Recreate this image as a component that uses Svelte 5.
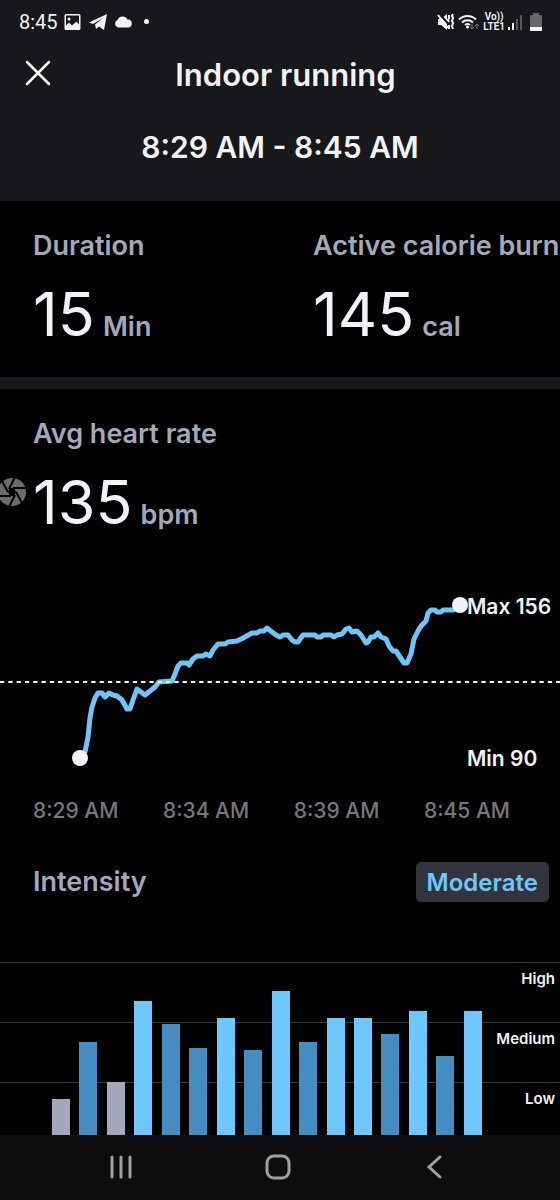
<script lang="ts">
	// heart rate trace, in chart units (560 wide)
	const trace = [
		[80, 168], [85, 162], [88, 147], [90, 128], [92, 117], [95, 108], [98, 103], [102, 103],
		[105, 107], [109, 103], [113, 105], [117, 106], [122, 110], [127, 119], [130, 119],
		[133, 110], [137, 99], [141, 102], [145, 105], [150, 101], [155, 97], [159, 92], [172, 91],
		[175, 84], [178, 76], [181, 73], [187, 73], [189, 75], [193, 69], [197, 66], [203, 66],
		[206, 64], [210, 66], [213, 60], [218, 54], [225, 54], [228, 52], [237, 51], [243, 48],
		[252, 43], [257, 43], [260, 41], [264, 41], [267, 38], [272, 42], [276, 45], [280, 47],
		[283, 45], [288, 45], [292, 50], [295, 52], [298, 52], [303, 45], [315, 45], [317, 47],
		[321, 47], [323, 45], [331, 45], [334, 47], [337, 45], [342, 44], [346, 39], [349, 38],
		[352, 42], [357, 41], [361, 45], [366, 53], [368, 52], [371, 47], [374, 47], [378, 43],
		[381, 47], [386, 49], [389, 56], [393, 61], [396, 61], [400, 67], [404, 73], [407, 73],
		[411, 64], [414, 49], [419, 39], [422, 35], [426, 31], [428, 23], [431, 20], [435, 20],
		[437, 22], [441, 22], [443, 20], [453, 20], [460, 16]
	];
	const points = trace.map((p) => p.join(',')).join(' ');

	const times = ['8:29 AM', '8:34 AM', '8:39 AM', '8:45 AM'];
	const levels = ['High', 'Medium', 'Low'];
	const intensity = [36, 93, 53, 134, 111, 87, 117, 85, 144, 93, 117, 117, 101, 124, 79, 124];

	function level(value: number) {
		if (value > 112) return 'high';
		if (value > 53) return 'medium';
		return 'low';
	}
</script>

<div class="screen">
	<header>
		<div class="status">
			<span class="clock">8:45</span>
			<svg width="18" height="18" viewBox="0 0 18 18">
				<path
					fill-rule="evenodd"
					d="M2 1h13a1.500 1.500 0 0 1 1.500 1.500v13A1.500 1.500 0 0 1 15 17H2A1.500 1.500 0 0 1 .5 15.500v-13A1.500 1.500 0 0 1 2 1zM2 2.500v10l3-3 3 3 4.500-4 2.500 3v-9zM5 4.500a1.500 1.500 0 1 1 0 3 1.500 1.500 0 0 1 0-3z"
				/>
			</svg>
			<svg width="20" height="18" viewBox="0 0 20 18">
				<path d="M1 9.500 19 1 16 17l-5-3.500-3 2.500-1-4.500 8-6.500-10 6z" />
			</svg>
			<svg width="18" height="18" viewBox="0 0 18 18">
				<path d="M4 14.500a4 4 0 0 1-.5-7.500 5.500 5.500 0 0 1 10-.5A4 4 0 0 1 14 14.500z" />
			</svg>
			<i class="more"></i>
			<div class="signals">
				<svg width="18" height="18" viewBox="0 0 18 18">
					<path d="M1 6h3l6-5v16l-6-5H1z" />
					<path d="M2 0 13 13" stroke="#17181b" stroke-width="2" />
					<path d="M1 2 11 15" stroke="#f2f3f6" stroke-width="2" />
					<path d="M12 2v3l-1 2 1 2M12 12v4M16 1l-1 2 1 2-1 3 1 2-1 3 1 3" fill="none" stroke="#f2f3f6" stroke-width="2" />
				</svg>
				<svg width="22" height="18" viewBox="0 0 22 18">
					<path d="M1 6.500a12 12 0 0 1 17 0M4 9.500a8 8 0 0 1 11 0M7 12a4 4 0 0 1 5 0" fill="none" stroke="#f2f3f6" stroke-width="2" />
					<circle cx="9.500" cy="14" r="1.500" />
					<path d="M14 11v5m-2-2 2 2 2-2M19 16v-5m-2 2 2-2 2 2" fill="none" stroke="#77787c" stroke-width="1" />
				</svg>
				<span class="network"><span>Vo))</span><span>LTE1</span></span>
				<svg width="15" height="18" viewBox="0 0 15 18">
					<path d="M0 14h2v3H0zM4 10h2v7H4z" />
					<path d="M8 6h2v11H8zM12 2h2v15h-2z" fill="#55565a" />
				</svg>
				<svg class="battery" width="12" height="18" viewBox="0 0 12 18">
					<path d="M3 0h6v2h2q1 0 1 1v14q0 1-1 1H1q-1 0-1-1V3q0-1 1-1h2z" fill="#66676b" />
					<path d="M0 14h12v3q0 1-1 1H1q-1 0-1-1z" />
				</svg>
			</div>
		</div>
		<div class="title">
			<button aria-label="Close">
				<svg width="26" height="26" viewBox="0 0 26 26">
					<path d="M2 2l22 22M24 2 2 24" fill="none" stroke="#fff" stroke-width="2.500" stroke-linecap="round" />
				</svg>
			</button>
			<h1>Indoor running</h1>
		</div>
		<p class="period">8:29 AM - 8:45 AM</p>
	</header>

	<section class="stats">
		<div class="stat">
			<h2>Duration</h2>
			<p><b>15</b> Min</p>
		</div>
		<div class="stat">
			<h2>Active calorie burn</h2>
			<p><b>145</b> cal</p>
		</div>
	</section>

	<section class="heart">
		<div class="stat">
			<h2>Avg heart rate</h2>
			<p><b>135</b> bpm</p>
			<svg class="shutter" width="27" height="28" viewBox="0 0 27 28">
				<circle cx="12" cy="14" r="14" fill="#6b6b6b" />
				<path
					d="M9 11 15 -1M13 10h14M16 14l6 11M15 17 9 29M11 18H-3M8 14 2 3"
					stroke="#000"
					stroke-width="2"
				/>
				<path d="M10 10h4l2 4-2 4h-4l-2-4z" fill="#000" />
			</svg>
		</div>
		<svg class="chart" viewBox="0 0 560 190">
			<polyline {points} fill="none" stroke="#6dc5fb" stroke-width="5" stroke-linejoin="round" />
			<line x1="0" y1="92" x2="560" y2="92" stroke="#f4f5ec" stroke-width="2" stroke-dasharray="4.300 4" />
			<circle cx="80" cy="168" r="8" />
			<circle cx="460" cy="15" r="8" />
			<text x="467" y="24">Max 156</text>
			<text x="467" y="176">Min 90</text>
		</svg>
		<div class="times">
			{#each times as time}
				<span>{time}</span>
			{/each}
		</div>
	</section>

	<section class="intensity">
		<div class="heading">
			<h2>Intensity</h2>
			<span class="tag">Moderate</span>
		</div>
		<div class="plot">
			{#each levels as name}
				<div class="band">{name}</div>
			{/each}
			<div class="bars">
				{#each intensity as value}
					<div class="bar {level(value)}" style="height: {value}px"></div>
				{/each}
			</div>
		</div>
	</section>

	<nav>
		<button aria-label="Recent apps">
			<svg width="26" height="26" viewBox="0 0 26 26"><path d="M4 3v20M13 3v20M22 3v20" /></svg>
		</button>
		<button aria-label="Home">
			<svg width="26" height="26" viewBox="0 0 26 26"><rect x="2" y="2" width="22" height="22" rx="7" /></svg>
		</button>
		<button aria-label="Back">
			<svg width="26" height="26" viewBox="0 0 26 26"><path d="M18 3 7 13l11 10" /></svg>
		</button>
	</nav>
</div>

<style>
	:global(body) {
		background: #000;
	}

	.screen {
		background: #000;
		color: #f2f3f8;
		font-family: Inter, 'Liberation Sans', sans-serif;
		font-weight: 500;
		overflow: hidden;
	}

	h1,
	h2,
	p {
		margin: 0;
	}

	svg {
		display: block;
		fill: #f2f3f6;
		flex: none;
	}

	button {
		display: block;
		padding: 0;
		border: none;
		background: none;
		cursor: pointer;
	}

	header {
		background: #17181b;
		padding-bottom: 33px;
	}

	.status {
		display: flex;
		align-items: center;
		gap: 6px;
		height: 43px;
		padding: 0 18px 0 19px;
	}

	.clock {
		font: 400 20px/24px Roboto, sans-serif;
	}

	.more {
		width: 5px;
		height: 5px;
		margin-left: 6px;
		border-radius: 50%;
		background: #f2f3f6;
	}

	.signals {
		display: flex;
		align-items: center;
		gap: 3px;
		margin-left: auto;
	}

	.network {
		display: flex;
		flex-direction: column;
		align-items: center;
		font: 600 10px/10px Roboto, sans-serif;
	}

	.battery {
		margin-left: 4px;
	}

	.title {
		display: grid;
		grid-template-columns: 50px 1fr 39px;
		padding-top: 10px;
	}

	.title button {
		align-self: start;
		margin: 7px 0 0 25px;
	}

	h1 {
		font-size: 31px;
		font-weight: 600;
		line-height: 44px;
		text-align: center;
	}

	.period {
		margin-top: 29px;
		font-size: 30px;
		font-weight: 600;
		line-height: 42px;
		text-align: center;
	}

	.stats {
		display: grid;
		grid-template-columns: 1fr 1fr;
		padding-bottom: 24px;
		border-bottom: 12px solid #17181b;
	}

	.stat {
		position: relative;
		min-width: 0;
		padding: 28px 0 0 33px;
		white-space: nowrap;
	}

	h2 {
		color: #a3a8bb;
		font-size: 27px;
		font-weight: 600;
		line-height: 34px;
	}

	.stat p {
		display: flex;
		align-items: baseline;
		gap: 8px;
		margin-top: 12px;
		color: #a3a8bb;
		font-size: 27px;
		font-weight: 600;
		line-height: 34px;
	}

	.stat b {
		color: #f2f3f8;
		font-size: 61px;
		font-weight: 400;
		line-height: 78px;
	}

	/* floating shortcut that hangs over the left edge */
	.shutter {
		position: absolute;
		left: 0;
		top: 89px;
	}

	.chart {
		width: 100%;
		height: auto;
		margin-top: 49px;
	}

	.chart text {
		font-size: 21px;
		font-weight: 600;
	}

	.times {
		display: flex;
		justify-content: space-between;
		padding: 17px 50px 0 33px;
		color: #77777b;
		font-size: 21px;
		line-height: 28px;
	}

	.heading {
		display: flex;
		align-items: center;
		justify-content: space-between;
		padding: 37px 11px 0 33px;
	}

	.tag {
		padding: 1px 11px 0;
		border-radius: 5px;
		background: #32343b;
		color: #6dc8ff;
		font-size: 24px;
		font-weight: 600;
		line-height: 39px;
	}

	.plot {
		position: relative;
		height: 173px;
		margin-top: 60px;
		overflow: hidden;
	}

	.band {
		box-sizing: border-box;
		height: 60px;
		padding: 4px 5px 0 0;
		border-top: 1px solid #333436;
		font-size: 15px;
		font-weight: 600;
		line-height: 24px;
		text-align: right;
	}

	.bars {
		position: absolute;
		inset: 0 78px 0 52px;
		display: flex;
		align-items: flex-end;
		justify-content: space-between;
	}

	.bar {
		width: 18px;
	}

	.high {
		background: #6dc8ff;
	}

	.medium {
		background: #438dc3;
	}

	.low {
		background: #a3a8bb;
	}

	nav {
		display: flex;
		justify-content: space-between;
		padding: 19px 112px 20px 108px;
		background: #0d0d0f;
	}

	nav svg {
		fill: none;
		stroke: #a0a0a0;
		stroke-width: 3;
		stroke-linecap: round;
	}
</style>
